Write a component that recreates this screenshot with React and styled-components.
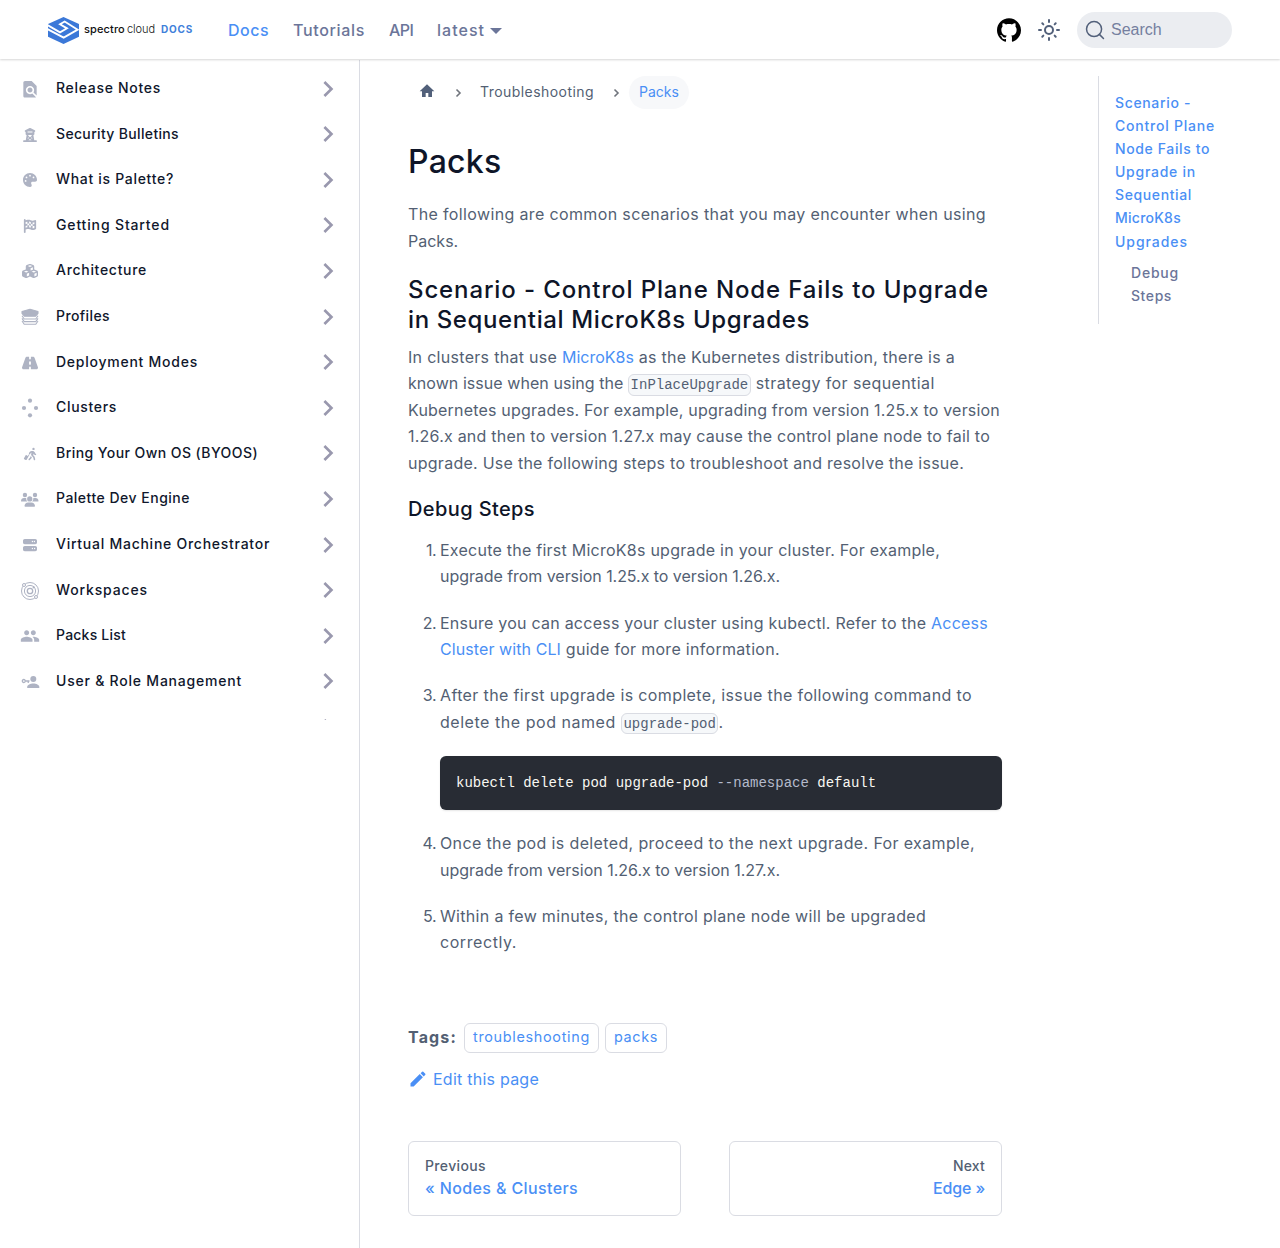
import React from 'react';
import styled, { createGlobalStyle } from 'styled-components';
import { MdFindInPage, MdPeople } from 'react-icons/md';
import {
  FaTowerObservation, FaPalette, FaFlagCheckered, FaCubes, FaRoad,
  FaPersonWalkingLuggage, FaUsers, FaServer,
} from 'react-icons/fa6';
import { SiGithub } from 'react-icons/si';

const color = {
  link: '#4a8ff5', body: '#535f73', heading: '#0e1528',
  nav: '#6b7599', border: '#dadce3', icon: '#aeb3c3', chevron: '#9998ae',
};

const GlobalStyle = createGlobalStyle`
  *, *::before, *::after { box-sizing: border-box; }
  body { margin: 0; background: #fff; color: ${color.body}; font: 400 16px/26.4px Inter, "Noto Sans", sans-serif; }
  a { color: ${color.link}; text-decoration: none; }
`;

const Page = styled.div`display: flex; flex-direction: column; min-height: 1248px;`;

/* Letter-spaced text runs */
const T = styled.span`letter-spacing: ${(p) => p.$ls || 0}px; white-space: pre;`;
const Line = styled(T)`display: block;`;
const A = styled(T).attrs({ as: 'a', href: '#' })``;

/* Navbar */
const Navbar = styled.header`
  display: flex; align-items: center; height: 59px; margin-bottom: 1px; padding: 1px 48px 0; background: #fff;
  box-shadow: 0 1px 2px rgba(0, 0, 0, 0.16); position: relative; z-index: 1;
`;
const Brand = styled.a`display: flex; align-items: center; width: 180px; height: 30px;`;
const BrandName = styled.span`
  display: flex; gap: 2px; margin-left: 5px; font-size: 11px; line-height: 14px; color: #111; padding-bottom: 2px;
`;
const Spectro = styled(T)`font-weight: 500;`;
const Cloud = styled(T)`font-weight: 300;`;
const BrandDocs = styled(T)`
  margin-left: 6px; font-size: 10px; font-weight: 700; line-height: 14px; color: #4080da; padding-bottom: 2px;
`;
const NavLinks = styled.nav`display: flex; gap: 24px; flex: 1;`;
const NavLink = styled.a`
  && { color: ${(p) => (p.$active ? color.link : color.nav)}; }
  display: flex; align-items: center; font-weight: 500; width: ${(p) => p.$w}px; white-space: nowrap;
`;
const Caret = styled.i`
  border: solid transparent; border-width: 6px 6px 0; border-top-color: currentColor; margin: 2px 0 0 5px;
`;
const NavTools = styled.div`display: flex; align-items: center; color: #000;`;
const SunButton = styled.button`
  display: flex; padding: 0; border: 0; background: none; color: #52607a; margin: 0 16px;
`;
const Search = styled.button`
  display: flex; align-items: center; gap: 6px; width: 155px; height: 36px; padding: 0 8px;
  border: 0; border-radius: 18px; background: #ebedf1; color: #52607a;
`;
const SearchLabel = styled.span`
  font: 16px/20px "Liberation Sans", Arial, sans-serif; color: #757f9f;
`;

/* Shell */
const Shell = styled.div`display: flex; flex: 1;`;
const Sidebar = styled.aside`width: 360px; border-right: 1px solid ${color.border};`;
const Menu = styled.ul`
  list-style: none; margin: 0; padding: 5.8px 15px 0 20px; height: 660px; overflow: hidden;
`;
const MenuItem = styled.li`display: flex; align-items: center; height: 45.6px;`;
const IconSlot = styled.span`
  display: flex; align-items: center; justify-content: center; width: 20px; height: 20px; margin-top: 1px;
  color: ${color.icon}; flex: none;
`;
const MenuLabel = styled(T)`
  flex: 1; margin-left: 16px; font-size: 14px; font-weight: 500; line-height: 20px; color: #10172c; padding-bottom: 1px;
`;
const Chevron = styled.svg`width: 32px; height: 32px; transform: rotate(90deg); fill: ${color.chevron};`;

const Main = styled.main`flex: 1; display: flex; padding: 16px 48px 0; align-items: flex-start;`;
const Article = styled.article`width: 594px;`;

const Crumbs = styled.nav`display: flex; align-items: center; height: 33px; font-size: 14px; line-height: 32px;`;
const HomeCrumb = styled.span`display: flex; padding: 0 10px 4px 11px; color: #52607a;`;
const Separator = styled.svg`
  width: 18px; height: 18px; margin: 1px ${(p) => p.$r}px 0 ${(p) => p.$l}px; fill: none; stroke: #70747c; stroke-width: 1.6;
`;
const CrumbText = styled(T)`width: 114px; padding-bottom: 1px;`;
const CrumbActive = styled.span`
  width: 60px; padding: 0 0 1px 10px; border-radius: 17px; background: #f7f8fa; color: ${color.link};
`;

const H1 = styled.h1`margin: 33px 0 19.4px; font-size: 32px; font-weight: 500; line-height: 40px; color: ${color.heading};`;
const H2 = styled.h2`margin: 20.5px 0 9.3px; font-size: 24px; font-weight: 500; line-height: 30px; color: ${color.heading};`;
const H3 = styled.h3`margin: 21px 0 14.8px; font-size: 20px; font-weight: 500; line-height: 25px; color: ${color.heading};`;
const P = styled.p`margin: 0;`;
const Code = styled.code`
  font: 14px "Liberation Mono", monospace; padding: 1.6px; border: 1px solid ${color.border};
  border-radius: 6px; background: #f6f8fa; vertical-align: middle; letter-spacing: 0;
`;
const Steps = styled.ol`list-style: none; margin: 0; padding: 0; display: flex; flex-direction: column; gap: 20px;`;
const Step = styled.li`display: grid; grid-template-columns: 28px 562px; column-gap: 4px;`;
const StepNumber = styled.span`text-align: right; letter-spacing: -0.5px;`;
const Pre = styled.pre`
  margin: 20.5px 0 0; padding: 16px; height: 54.5px; border-radius: 6px; background: #282c34; color: #f8f8f2;
  font: 14px/23px "Liberation Mono", monospace; box-shadow: 0 1px 2px rgba(0, 0, 0, 0.1);
`;
const Flag = styled.span`color: #b4bacb;`;

const Tags = styled.div`display: flex; align-items: center; margin-top: 67.4px; height: 30px;`;
const TagsTitle = styled(T)`font-weight: 700; width: 56px; padding-bottom: 2px;`;
const Tag = styled.a`
  display: flex; justify-content: center; width: ${(p) => p.$w}px; height: 30px; margin-right: 6px;
  border: 1px solid ${color.border}; border-radius: 6px; font-size: 14.4px; line-height: 26px;
`;
const Edit = styled.a`display: flex; align-items: center; gap: 5px; margin-top: 13px;`;
const Pager = styled.nav`display: grid; grid-template-columns: 1fr 1fr; gap: 48px; margin-top: 48.2px;`;
const PagerCard = styled.a`
  height: 75px; padding: 13px 16px; border: 1px solid ${color.border}; border-radius: 6px; font-weight: 500;
  text-align: ${(p) => (p.$next ? 'right' : 'left')};
`;
const PagerHint = styled(Line)`font-size: 14px; line-height: 22px; color: ${color.body};`;
const PagerTitle = styled(Line)`line-height: 23px;`;

/* Table of contents */
const Toc = styled.aside`
  width: 134px; margin-left: 96px; height: 248px; padding: 15px 0 0 16px; border-left: 1px solid ${color.border};
  font-size: 14px; font-weight: 500; line-height: 23.1px;
`;
const TocLink = styled.a`display: block;`;
const TocSub = styled(TocLink)`&& { color: ${color.nav}; } margin: 8.4px 0 0 16px;`;

const Logo = () => (
  <svg width="31" height="27" viewBox="0 0 93 81">
    <path fill="#3b78d8" d="M46.5 0 93 21V59L46.5 81 0 59V21Z" />
    <path fill="none" stroke="#fff" strokeWidth="5.5" d="M-2 24 36 46 57 34 36 22 50 13.5 89 38 47 62-2 36" />
  </svg>
);
const Sun = () => (
  <svg width="24" height="24" viewBox="0 0 24 24" fill="none" stroke="currentColor" strokeWidth="2" strokeLinecap="round">
    <circle cx="12" cy="12" r="4" />
    <path d="M12 2v2M12 20v2M2 12h2M20 12h2M5.3 5.3l1.05 1.05M17.65 17.65l1.05 1.05M18.7 5.3l-1.05 1.05M6.35 17.65 5.3 18.7" />
  </svg>
);
const SearchIcon = () => (
  <svg width="20" height="20" viewBox="0 0 20 20" fill="none" stroke="currentColor" strokeWidth="1.5" strokeLinecap="round">
    <circle cx="9.06" cy="9.06" r="7.53" /><path d="m14.39 14.39 4.08 4.08" />
  </svg>
);
const Home = () => (
  <svg width="16" height="16" viewBox="0 0 24 24" fill="currentColor">
    <path d="M10 21v-6h4v6h5.5v-8.5H23L12 2 1 12.5h3.5V21z" />
  </svg>
);
const Pencil = () => (
  <svg width="20" height="20" viewBox="0 0 40 40" fill="currentColor">
    <path d="m34.5 11.7-3 3.1-6.3-6.3 3.1-3q.5-.5 1.2-.5t1.1.5l3.9 3.9q.5.4.5 1.1t-.5 1.2zM5 28.7 23.5 10.2l6.3 6.3L11.3 35H5z" />
  </svg>
);
const Stack = () => (
  <svg width="20" height="20" viewBox="0 0 20 20" fill="none" stroke="currentColor" strokeWidth="1.1" strokeLinejoin="round">
    <path d="M10 2.2 18 4.6V6.5L15.5 9.3H4.5L2 6.5V4.6Z" fill="currentColor" />
    <path d="M2 8.8 4.2 12H15.8L18 8.8M2 11.4 4.2 14.6H15.8L18 11.4M2 14 4.2 17.2H15.8L18 14" />
  </svg>
);
const Dots = () => (
  <svg width="20" height="20" viewBox="0 0 20 20" fill="currentColor">
    <circle cx="10" cy="2.7" r="2.1" /><circle cx="4" cy="10" r="2.1" />
    <circle cx="16" cy="10" r="2.1" /><circle cx="10" cy="17.3" r="2.1" />
  </svg>
);
const Orbit = () => (
  <svg width="20" height="20" viewBox="0 0 20 20" fill="none" stroke="currentColor" strokeWidth="1">
    <circle cx="10" cy="10" r="8.5" /><circle cx="10" cy="10" r="5.6" /><circle cx="10" cy="10" r="2.7" strokeWidth="1.3" />
    <circle cx="4" cy="4" r="1.5" fill="#fff" /><circle cx="16" cy="16" r="1.5" fill="#fff" />
    <circle cx="13.7" cy="6.2" r=".7" fill="currentColor" />
  </svg>
);
const UserKey = () => (
  <svg width="20" height="20" viewBox="0 0 20 20" fill="currentColor">
    <circle cx="13.3" cy="7" r="3" /><path d="M7.2 16v-1.2c0-2 3.2-3.4 6.1-3.4s6 1.4 6 3.4V16z" />
    <circle cx="3.8" cy="9" r="1.5" fill="none" stroke="currentColor" strokeWidth="1.3" />
    <path d="M5.3 8.3h4.2v1.4h-.6V11H7.6V9.7H5.3z" />
  </svg>
);

const menu = [
  ['Release Notes', 0.7, <MdFindInPage size={20.5} />],
  ['Security Bulletins', 0.34, <FaTowerObservation size={14} />],
  ['What is Palette?', 0.69, <FaPalette size={14} />],
  ['Getting Started', 0.85, <FaFlagCheckered size={14} />],
  ['Architecture', 0.7, <FaCubes size={16} />],
  ['Profiles', 0.4, <Stack />],
  ['Deployment Modes', 0.75, <FaRoad size={16} />],
  ['Clusters', 0.68, <Dots />],
  ['Bring Your Own OS (BYOOS)', 0.44, <FaPersonWalkingLuggage size={14} />],
  ['Palette Dev Engine', 0.49, <FaUsers size={17.5} />],
  ['Virtual Machine Orchestrator', 0.74, <FaServer size={14} />],
  ['Workspaces', 0.86, <Orbit />],
  ['Packs List', 0.22, <MdPeople size={20} />],
  ['User & Role Management', 0.78, <UserKey />],
  ['', 0, null],
];

const toc = [
  ['Scenario -', 0.65], ['Control Plane', 0.78], ['Node Fails to', 0.62], ['Upgrade in', 0.74],
  ['Sequential', 0.62], ['MicroK8s', 0.25], ['Upgrades', 0.95],
];

export default function App() {
  return (
    <Page>
      <GlobalStyle />
      <Navbar>
        <Brand href="#">
          <Logo />
          <BrandName><Spectro $ls={0.13}>spectro</Spectro><Cloud $ls={-0.05}>cloud</Cloud></BrandName>
          <BrandDocs $ls={0.85}>DOCS</BrandDocs>
        </Brand>
        <NavLinks>
          <NavLink href="#" $active $w={41}><T $ls={0.48}>Docs</T></NavLink>
          <NavLink href="#" $w={72}><T $ls={0.67}>Tutorials</T></NavLink>
          <NavLink href="#" $w={24}><T $ls={-0.6}>API</T></NavLink>
          <NavLink href="#" $w={66}><T $ls={1.02}>latest</T><Caret /></NavLink>
        </NavLinks>
        <NavTools>
          <SiGithub size={24} />
          <SunButton><Sun /></SunButton>
          <Search><SearchIcon /><SearchLabel>Search</SearchLabel></Search>
        </NavTools>
      </Navbar>
      <Shell>
        <Sidebar>
          <Menu>
            {menu.map(([label, ls, icon], i) => (
              <MenuItem key={i}>
                <IconSlot>{icon}</IconSlot>
                <MenuLabel $ls={ls}>{label}</MenuLabel>
                <Chevron viewBox="0 0 24 24"><path d="M7.41 15.41 12 10.83l4.59 4.58L18 14l-6-6-6 6z" /></Chevron>
              </MenuItem>
            ))}
          </Menu>
        </Sidebar>
        <Main>
          <Article>
            <Crumbs>
              <HomeCrumb><Home /></HomeCrumb>
              <Separator viewBox="0 0 18 18" $l={4} $r={13}><path d="M7.5 5.5 11 9l-3.5 3.5" /></Separator>
              <CrumbText $ls={0.44}>Troubleshooting</CrumbText>
              <Separator viewBox="0 0 18 18" $l={13} $r={4}><path d="M7.5 5.5 11 9l-3.5 3.5" /></Separator>
              <CrumbActive>Packs</CrumbActive>
            </Crumbs>
            <H1><T $ls={0.25}>Packs</T></H1>
            <P>
              <Line $ls={0.36}>The following are common scenarios that you may encounter when using</Line>
              <Line>Packs.</Line>
            </P>
            <H2>
              <Line $ls={0.876}>Scenario - Control Plane Node Fails to Upgrade</Line>
              <Line $ls={0.62}>in Sequential MicroK8s Upgrades</Line>
            </H2>
            <P>
              <Line><T $ls={0.3}>In clusters that use </T><A>MicroK8s</A><T $ls={0.265}> as the Kubernetes distribution, there is a</T></Line>
              <Line><T $ls={0.054}>known issue when using the </T><Code>InPlaceUpgrade</Code><T $ls={0.4}> strategy for sequential</T></Line>
              <Line $ls={0.196}>Kubernetes upgrades. For example, upgrading from version 1.25.x to version</Line>
              <Line $ls={0.221}>1.26.x and then to version 1.27.x may cause the control plane node to fail to</Line>
              <Line $ls={0.261}>upgrade. Use the following steps to troubleshoot and resolve the issue.</Line>
            </P>
            <H3><T $ls={0.39}>Debug Steps</T></H3>
            <Steps>
              <Step>
                <StepNumber>1.</StepNumber>
                <div>
                  <Line $ls={0.246}>Execute the first MicroK8s upgrade in your cluster. For example,</Line>
                  <Line $ls={-0.058}>upgrade from version 1.25.x to version 1.26.x.</Line>
                </div>
              </Step>
              <Step>
                <StepNumber>2.</StepNumber>
                <div>
                  <Line><T $ls={0.241}>Ensure you can access your cluster using kubectl. Refer to the </T><A $ls={0.24}>Access</A></Line>
                  <Line><A $ls={0.088}>Cluster with CLI</A><T $ls={0.3}> guide for more information.</T></Line>
                </div>
              </Step>
              <Step>
                <StepNumber>3.</StepNumber>
                <div>
                  <Line $ls={0.369}>After the first upgrade is complete, issue the following command to</Line>
                  <Line><T $ls={0.54}>delete the pod named </T><Code>upgrade-pod</Code>.</Line>
                  <Pre>kubectl delete pod upgrade-pod <Flag>--namespace</Flag> default</Pre>
                </div>
              </Step>
              <Step>
                <StepNumber>4.</StepNumber>
                <div>
                  <Line $ls={0.363}>Once the pod is deleted, proceed to the next upgrade. For example,</Line>
                  <Line $ls={-0.01}>upgrade from version 1.26.x to version 1.27.x.</Line>
                </div>
              </Step>
              <Step>
                <StepNumber>5.</StepNumber>
                <div>
                  <Line $ls={0.318}>Within a few minutes, the control plane node will be upgraded</Line>
                  <Line $ls={0.567}>correctly.</Line>
                </div>
              </Step>
            </Steps>
            <Tags>
              <TagsTitle $ls={1.15}>Tags:</TagsTitle>
              <Tag href="#" $w={135}><T $ls={0.69}>troubleshooting</T></Tag>
              <Tag href="#" $w={62}><T $ls={0.65}>packs</T></Tag>
            </Tags>
            <Edit href="#"><Pencil /><T $ls={0.24}>Edit this page</T></Edit>
            <Pager>
              <PagerCard href="#">
                <PagerHint $ls={0.36}>Previous</PagerHint>
                <PagerTitle $ls={0.38}>« Nodes & Clusters</PagerTitle>
              </PagerCard>
              <PagerCard href="#" $next>
                <PagerHint $ls={0.17}>Next</PagerHint>
                <PagerTitle $ls={-0.14}>Edge »</PagerTitle>
              </PagerCard>
            </Pager>
          </Article>
          <Toc>
            <TocLink href="#">{toc.map(([t, ls]) => <Line key={t} $ls={ls}>{t}</Line>)}</TocLink>
            <TocSub href="#"><Line $ls={0.78}>Debug</Line><Line $ls={0.58}>Steps</Line></TocSub>
          </Toc>
        </Main>
      </Shell>
    </Page>
  );
}
